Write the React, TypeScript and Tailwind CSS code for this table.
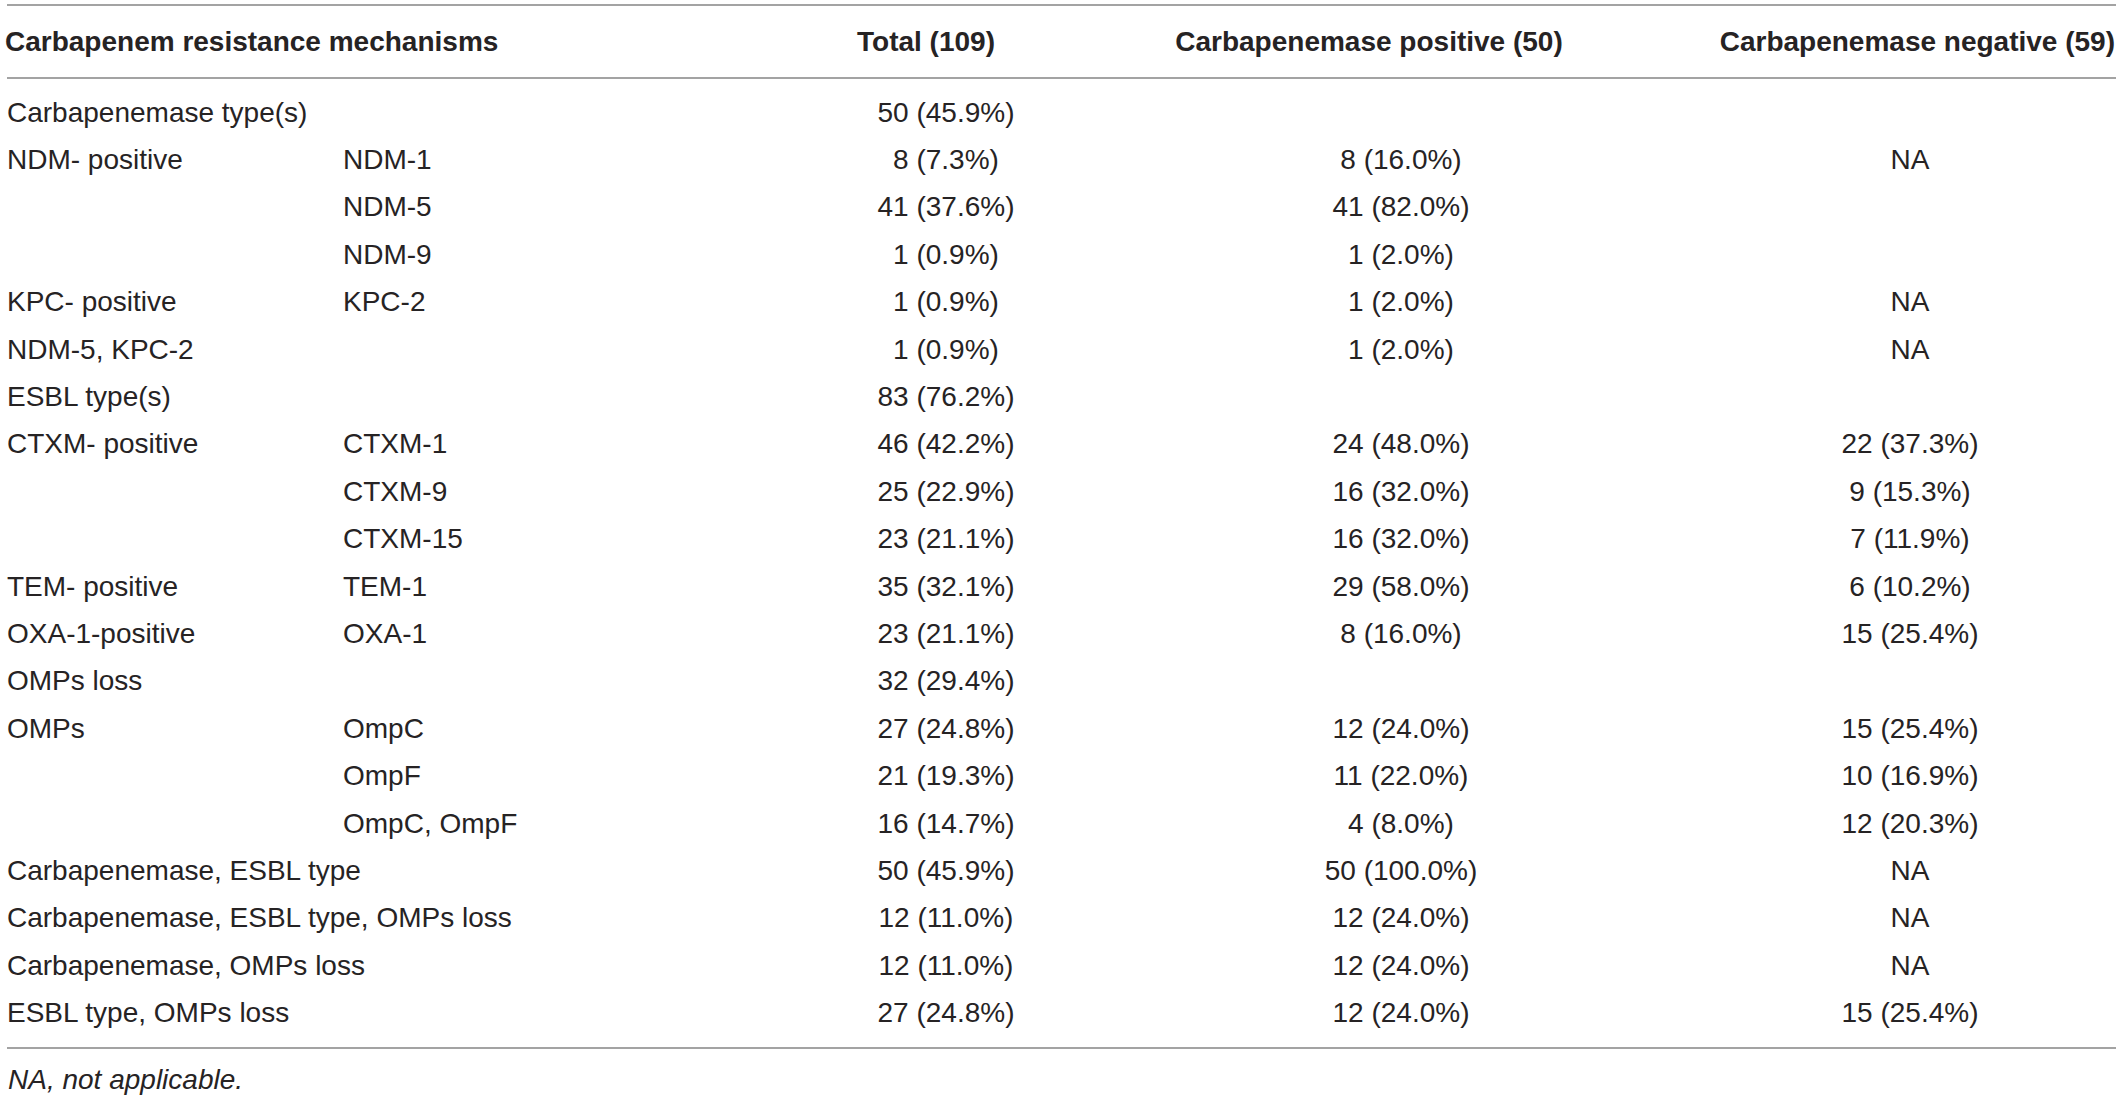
import React from "react";

type Row = {
  a?: string;
  b?: string;
  span?: boolean;
  t?: string;
  p?: string;
  n?: string;
};

const rows: Row[] = [
  { a: "Carbapenemase type(s)", span: true, t: "50 (45.9%)" },
  { a: "NDM- positive", b: "NDM-1", t: "8 (7.3%)", p: "8 (16.0%)", n: "NA" },
  { b: "NDM-5", t: "41 (37.6%)", p: "41 (82.0%)" },
  { b: "NDM-9", t: "1 (0.9%)", p: "1 (2.0%)" },
  { a: "KPC- positive", b: "KPC-2", t: "1 (0.9%)", p: "1 (2.0%)", n: "NA" },
  { a: "NDM-5, KPC-2", t: "1 (0.9%)", p: "1 (2.0%)", n: "NA" },
  { a: "ESBL type(s)", span: true, t: "83 (76.2%)" },
  { a: "CTXM- positive", b: "CTXM-1", t: "46 (42.2%)", p: "24 (48.0%)", n: "22 (37.3%)" },
  { b: "CTXM-9", t: "25 (22.9%)", p: "16 (32.0%)", n: "9 (15.3%)" },
  { b: "CTXM-15", t: "23 (21.1%)", p: "16 (32.0%)", n: "7 (11.9%)" },
  { a: "TEM- positive", b: "TEM-1", t: "35 (32.1%)", p: "29 (58.0%)", n: "6 (10.2%)" },
  { a: "OXA-1-positive", b: "OXA-1", t: "23 (21.1%)", p: "8 (16.0%)", n: "15 (25.4%)" },
  { a: "OMPs loss", span: true, t: "32 (29.4%)" },
  { a: "OMPs", b: "OmpC", t: "27 (24.8%)", p: "12 (24.0%)", n: "15 (25.4%)" },
  { b: "OmpF", t: "21 (19.3%)", p: "11 (22.0%)", n: "10 (16.9%)" },
  { b: "OmpC, OmpF", t: "16 (14.7%)", p: "4 (8.0%)", n: "12 (20.3%)" },
  { a: "Carbapenemase, ESBL type", span: true, t: "50 (45.9%)", p: "50 (100.0%)", n: "NA" },
  { a: "Carbapenemase, ESBL type, OMPs loss", span: true, t: "12 (11.0%)", p: "12 (24.0%)", n: "NA" },
  { a: "Carbapenemase, OMPs loss", span: true, t: "12 (11.0%)", p: "12 (24.0%)", n: "NA" },
  { a: "ESBL type, OMPs loss", span: true, t: "27 (24.8%)", p: "12 (24.0%)", n: "15 (25.4%)" },
];

export default function App() {
  return (
    <div
      className="w-[2123px] h-[1096px] bg-white text-[#262324] overflow-hidden"
      style={{ fontFamily: '"Liberation Sans", Arial, sans-serif' }}
    >
      <div className="pt-[4px]">
        <div className="mx-[7px] h-[2px] bg-[#a3a3a3]" />
        <div className="grid grid-cols-[755px_332px_554px_1fr] h-[71px] items-center text-[28px] font-bold pl-[5px] pr-[8px]">
          <div className="whitespace-nowrap">Carbapenem resistance mechanisms</div>
          <div className="text-center whitespace-nowrap">Total (109)</div>
          <div className="text-center whitespace-nowrap">Carbapenemase positive (50)</div>
          <div className="text-right whitespace-nowrap">Carbapenemase negative (59)</div>
        </div>
        <div className="mx-[7px] h-[2px] bg-[#a3a3a3]" />
        <div className="pt-[10px] pb-[10px] pl-[7px] text-[28px]">
          {rows.map((r, i) => (
            <div
              key={i}
              className="grid grid-cols-[336px_457px_292px_618px_400px] h-[47.4px] items-center whitespace-nowrap"
            >
              {r.span ? (
                <div className="col-span-2">{r.a}</div>
              ) : (
                <>
                  <div>{r.a ?? ""}</div>
                  <div>{r.b ?? ""}</div>
                </>
              )}
              <div className="text-center">{r.t ?? ""}</div>
              <div className="text-center">{r.p ?? ""}</div>
              <div className="text-center">{r.n ?? ""}</div>
            </div>
          ))}
        </div>
        <div className="mx-[7px] h-[2px] bg-[#a3a3a3]" />
        <div className="pl-[8px] pt-[10px] text-[28px] italic">NA, not applicable.</div>
      </div>
    </div>
  );
}
